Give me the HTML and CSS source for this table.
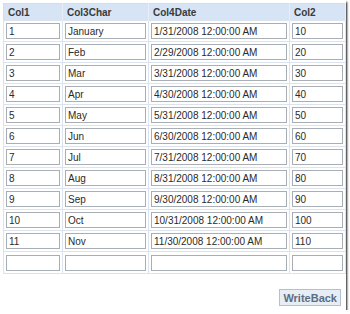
FILE: index.html
```html
<!DOCTYPE html>
<html>
<head>
<meta charset="utf-8">
<link rel="stylesheet" href="styles.css">
</head>
<body>
<div class="window">
  <table class="grid">
    <tr class="head"><th class="w1">Col1</th><th class="w2">Col3Char</th><th class="w3">Col4Date</th><th class="w4">Col2</th></tr>
    <tr><td><input class="f f1" value="1"></td><td><input class="f f2" value="January"></td><td><input class="f f3" value="1/31/2008 12:00:00 AM"></td><td><input class="f f4" value="10"></td></tr>
    <tr><td><input class="f f1" value="2"></td><td><input class="f f2" value="Feb"></td><td><input class="f f3" value="2/29/2008 12:00:00 AM"></td><td><input class="f f4" value="20"></td></tr>
    <tr><td><input class="f f1" value="3"></td><td><input class="f f2" value="Mar"></td><td><input class="f f3" value="3/31/2008 12:00:00 AM"></td><td><input class="f f4" value="30"></td></tr>
    <tr><td><input class="f f1" value="4"></td><td><input class="f f2" value="Apr"></td><td><input class="f f3" value="4/30/2008 12:00:00 AM"></td><td><input class="f f4" value="40"></td></tr>
    <tr><td><input class="f f1" value="5"></td><td><input class="f f2" value="May"></td><td><input class="f f3" value="5/31/2008 12:00:00 AM"></td><td><input class="f f4" value="50"></td></tr>
    <tr><td><input class="f f1" value="6"></td><td><input class="f f2" value="Jun"></td><td><input class="f f3" value="6/30/2008 12:00:00 AM"></td><td><input class="f f4" value="60"></td></tr>
    <tr><td><input class="f f1" value="7"></td><td><input class="f f2" value="Jul"></td><td><input class="f f3" value="7/31/2008 12:00:00 AM"></td><td><input class="f f4" value="70"></td></tr>
    <tr><td><input class="f f1" value="8"></td><td><input class="f f2" value="Aug"></td><td><input class="f f3" value="8/31/2008 12:00:00 AM"></td><td><input class="f f4" value="80"></td></tr>
    <tr><td><input class="f f1" value="9"></td><td><input class="f f2" value="Sep"></td><td><input class="f f3" value="9/30/2008 12:00:00 AM"></td><td><input class="f f4" value="90"></td></tr>
    <tr><td><input class="f f1" value="10"></td><td><input class="f f2" value="Oct"></td><td><input class="f f3" value="10/31/2008 12:00:00 AM"></td><td><input class="f f4" value="100"></td></tr>
    <tr><td><input class="f f1" value="11"></td><td><input class="f f2" value="Nov"></td><td><input class="f f3" value="11/30/2008 12:00:00 AM"></td><td><input class="f f4" value="110"></td></tr>
    <tr><td><input class="f f1" value=""></td><td><input class="f f2" value=""></td><td><input class="f f3" value=""></td><td><input class="f f4" value=""></td></tr>
  </table>
  <div class="actions"><button class="btn">WriteBack</button></div>
</div>
</body>
</html>
```
FILE: styles.css
```css
html, body {
  margin: 0;
  padding: 0;
  background: #ffffff;
}
body {
  font-family: "Liberation Sans", Arial, sans-serif;
}
.window {
  width: 346px;
  height: 310px;
  box-sizing: border-box;
  padding: 3px 2px 0 3px;
  background: #fff;
  box-shadow: 1px 2px 2px rgba(0, 0, 0, 0.9);
}
.grid {
  border-collapse: collapse;
  border: 1px solid #d3dce8;
}
.grid th {
  background: #d6e4f5;
  color: #3a3a3a;
  font-size: 10px;
  font-weight: bold;
  text-align: left;
  height: 16px;
  padding: 0 0 0 4px;
  border-right: 1px solid #e8eef6;
}
.grid td {
  padding: 2px 2px 2px 2px;
  border: 1px solid #dbe3ee;
  height: 16px;
}
.grid tr:last-child td {
  padding-top: 3px;
}
.f {
  display: block;
  box-sizing: border-box;
  height: 16px;
  margin: 0;
  padding: 0 2px;
  border: 1px solid #a7aeb6;
  background: #fff;
  color: #2a2a2a;
  font-family: "Liberation Sans", Arial, sans-serif;
  font-size: 10px;
  outline: none;
}
.f1 { width: 54px; }
.f2 { width: 81px; }
.f3 { width: 136px; }
.f4 { width: 51px; }
.actions {
  display: flex;
  justify-content: flex-end;
  padding: 15px 3px 0 0;
}
.btn {
  height: 17px;
  padding: 0 3px;
  background: #e6edf5;
  border: 1px solid #b4c0cf;
  color: #5b6e86;
  font-family: "Liberation Sans", Arial, sans-serif;
  font-size: 11px;
  font-weight: bold;
}
```
